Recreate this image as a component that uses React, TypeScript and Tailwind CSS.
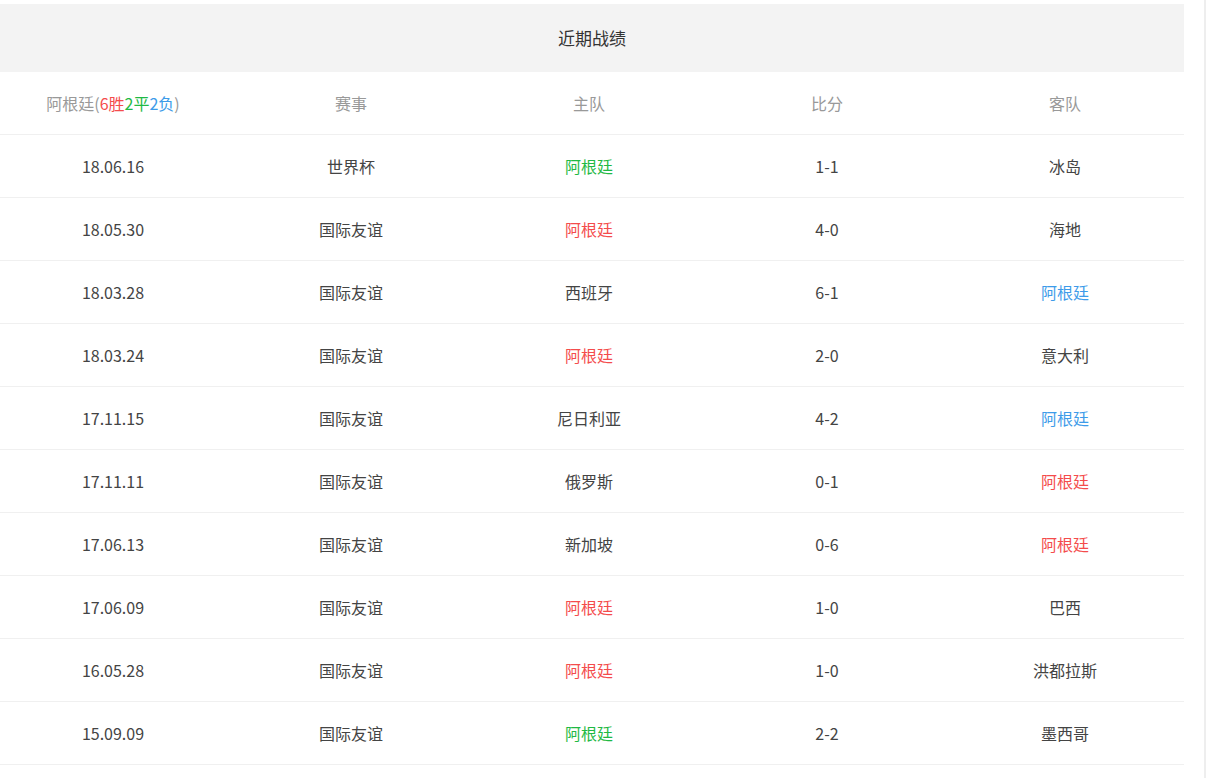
const rows: [string,string,string,string,string,string,string][] = [
["18.06.16","世界杯","阿根廷","g","1-1","冰岛",""],
["18.05.30","国际友谊","阿根廷","r","4-0","海地",""],
["18.03.28","国际友谊","西班牙","","6-1","阿根廷","b"],
["18.03.24","国际友谊","阿根廷","r","2-0","意大利",""],
["17.11.15","国际友谊","尼日利亚","","4-2","阿根廷","b"],
["17.11.11","国际友谊","俄罗斯","","0-1","阿根廷","r"],
["17.06.13","国际友谊","新加坡","","0-6","阿根廷","r"],
["17.06.09","国际友谊","阿根廷","r","1-0","巴西",""],
["16.05.28","国际友谊","阿根廷","r","1-0","洪都拉斯",""],
["15.09.09","国际友谊","阿根廷","g","2-2","墨西哥",""],
];
const col = (c: string) => c === "r" ? "text-[#f44c4c]" : c === "g" ? "text-[#1fb944]" : c === "b" ? "text-[#3d9be9]" : "text-[#444]";
export default function App() {
  return (
    <div className="w-[1207px] h-[778px] bg-white overflow-hidden flex" style={{fontFamily:'"Noto Sans CJK SC", sans-serif'}}>
      <div className="w-[1184px] pt-[4px] text-[16px] overflow-hidden">
        <div className="h-[68px] bg-[#f3f3f3] flex items-center justify-center text-[#333] text-[17px]">近期战绩</div>
        <div className="border-b border-[#f0f0f0]">
          <div className="grid grid-cols-5 w-[1190px] -ml-[6px] h-[62px] items-center text-center text-[#999]">
            <div>阿根廷(<span className="text-[#f44c4c]">6胜</span><span className="text-[#1fb944]">2平</span><span className="text-[#3d9be9]">2负</span>)</div>
            <div>赛事</div><div>主队</div><div>比分</div><div>客队</div>
          </div>
        </div>
        {rows.map((r,i)=>(
          <div key={i} className="border-b border-[#f0f0f0]">
            <div className="grid grid-cols-5 w-[1190px] -ml-[6px] h-[62px] items-center text-center text-[#444]">
              <div>{r[0]}</div><div>{r[1]}</div><div className={col(r[3])}>{r[2]}</div><div>{r[4]}</div><div className={col(r[6])}>{r[5]}</div>
            </div>
          </div>
        ))}
      </div>
      <div className="flex-1" />
      <div className="w-[2px] bg-[#eeeeee] mr-[1px]" />
    </div>
  );
}
